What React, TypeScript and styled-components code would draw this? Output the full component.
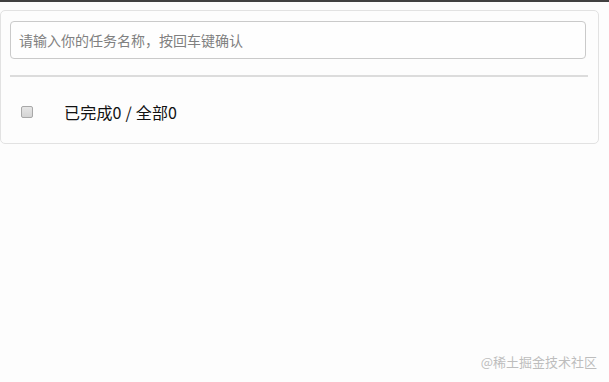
import styled, { createGlobalStyle } from 'styled-components'

const GlobalStyle = createGlobalStyle`
    html, body {
        margin: 0;
        padding: 0;
        background: #fdfdfd;
        font-family: "Microsoft YaHei", "Noto Sans CJK SC", "Noto Sans", sans-serif;
    }
`

const TopBar = styled.div`
    height: 2px;
    background: #414141;
`

const Page = styled.div`
    position: relative;
    height: 380px;
    padding-top: 8px;
    box-sizing: border-box;
`

const Card = styled.div`
    width: 599px;
    box-sizing: border-box;
    border: 1px solid #e2e2e2;
    border-radius: 5px;
    padding: 10px 10px 0 9px;
    background: #fdfdfd;
`

const Header = styled.div`
    padding-right: 2px;
    padding-bottom: 16px;
    border-bottom: 2px solid #dcdcdc;
`

const TaskInput = styled.input`
    display: block;
    width: 100%;
    height: 38px;
    box-sizing: border-box;
    border: 1px solid #cacaca;
    border-radius: 4px;
    padding: 0 8px;
    font-size: 14px;
    font-family: inherit;
    color: #333;
    background: #fefefe;
    outline: none;
    &::placeholder {
        color: #808080;
    }
`

const Footer = styled.div`
    display: flex;
    align-items: center;
    height: 62px;
    padding: 4px 0 0 11px;
`

const Check = styled.input`
    appearance: none;
    width: 12px;
    height: 12px;
    margin: 0 30px 0 0;
    border: 1px solid #a8a8a8;
    border-radius: 2px;
    background: linear-gradient(#e6e6e6, #d4d4d4);
    box-sizing: border-box;
`

const Summary = styled.span`
    font-size: 16px;
    letter-spacing: 0.2px;
    color: #111;
    margin-left: 1px;
`

const Watermark = styled.div`
    position: absolute;
    right: 12px;
    bottom: 11px;
    font-size: 13px;
    color: #bdbdbd;
`

export default function App() {
    return (
        <>
            <GlobalStyle />
            <TopBar />
            <Page>
                <Card>
                    <Header>
                        <TaskInput placeholder="请输入你的任务名称，按回车键确认" />
                    </Header>
                    <Footer>
                        <Check type="checkbox" />
                        <Summary>已完成0 / 全部0</Summary>
                    </Footer>
                </Card>
                <Watermark>@稀土掘金技术社区</Watermark>
            </Page>
        </>
    )
}
